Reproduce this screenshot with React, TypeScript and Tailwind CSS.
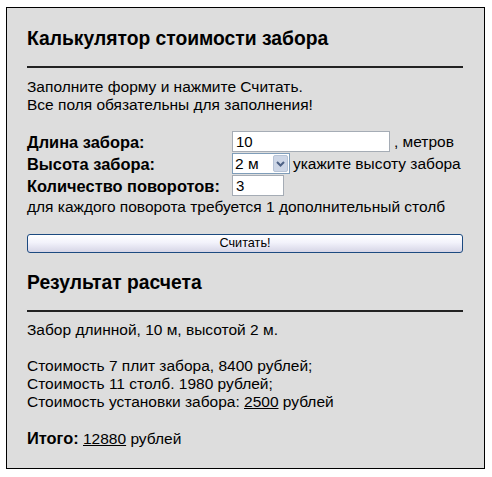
export default function App() {
  return (
    <div className="min-h-[477px] bg-white pl-[6px] pt-[7px] font-['Liberation_Sans',Arial,sans-serif] text-[15.5px] leading-[18px] text-black">
      <div className="w-[479px] h-[462px] border border-black bg-[#dddddd] px-[20px] pt-[20px]">
        <h1 className="text-[19.3px] font-bold leading-[22px]">Калькулятор стоимости забора</h1>
        <div className="mt-[16px] h-[2px] w-[436px] bg-[#222]" />
        <p className="mt-[10px]">
          Заполните форму и нажмите Считать.
          <br />
          Все поля обязательны для заполнения!
        </p>

        <div className="mt-[17px] grid grid-cols-[205px_1fr] gap-y-[1px]">
          <div className="flex items-center text-[16.4px] font-bold">Длина забора:</div>
          <div className="flex items-center">
            <input
              defaultValue="10"
              className="h-[21px] w-[158px] border border-[#a5acb5] bg-white px-[3px] text-[15px] outline-none"
            />
            <span className="ml-[4px]">, метров</span>
          </div>

          <div className="flex items-center text-[16.4px] font-bold">Высота забора:</div>
          <div className="flex items-center">
            <div className="flex h-[21px] w-[58px] items-center border border-[#7f9db9] bg-white">
              <span className="flex-1 pl-[2px]">2 м</span>
              <span className="mr-[1px] flex h-[17px] w-[15px] items-center justify-center rounded-[2px] border border-[#b6c3d6] bg-[#cdd6e6]">
                <svg width="9" height="6" viewBox="0 0 9 6">
                  <path d="M1 1 L4.5 4.5 L8 1" fill="none" stroke="#4d6185" strokeWidth="2" />
                </svg>
              </span>
            </div>
            <span className="ml-[3px]">укажите высоту забора</span>
          </div>

          <div className="flex items-center text-[16.4px] font-bold">Количество поворотов:</div>
          <div className="flex items-center">
            <input
              defaultValue="3"
              className="h-[21px] w-[52px] border border-[#a5acb5] bg-white px-[3px] text-[15px] outline-none"
            />
          </div>
        </div>
        <p className="mt-[2px]">для каждого поворота требуется 1 дополнительный столб</p>

        <button
          type="button"
          className="mt-[18px] block h-[19px] w-[436px] rounded-[3px] border border-[#1c4a80] bg-[linear-gradient(180deg,#ffffff_0%,#f2f2fb_45%,#d6d5e6_100%)] text-[12.7px] leading-[15px]"
        >
          Считать!
        </button>

        <h2 className="mt-[19px] text-[19.3px] font-bold leading-[22px]">Результат расчета</h2>
        <div className="mt-[16px] h-[2px] w-[436px] bg-[#222]" />
        <p className="mt-[9px]">Забор длинной, 10 м, высотой 2 м.</p>
        <p className="mt-[18px]">
          Стоимость 7 плит забора, 8400 рублей;
          <br />
          Стоимость 11 столб. 1980 рублей;
          <br />
          Стоимость установки забора: <span className="underline">2500</span> рублей
        </p>
        <p className="mt-[18px]">
          <b className="text-[16.4px]">Итого:</b> <span className="underline">12880</span> рублей
        </p>
      </div>
    </div>
  );
}
